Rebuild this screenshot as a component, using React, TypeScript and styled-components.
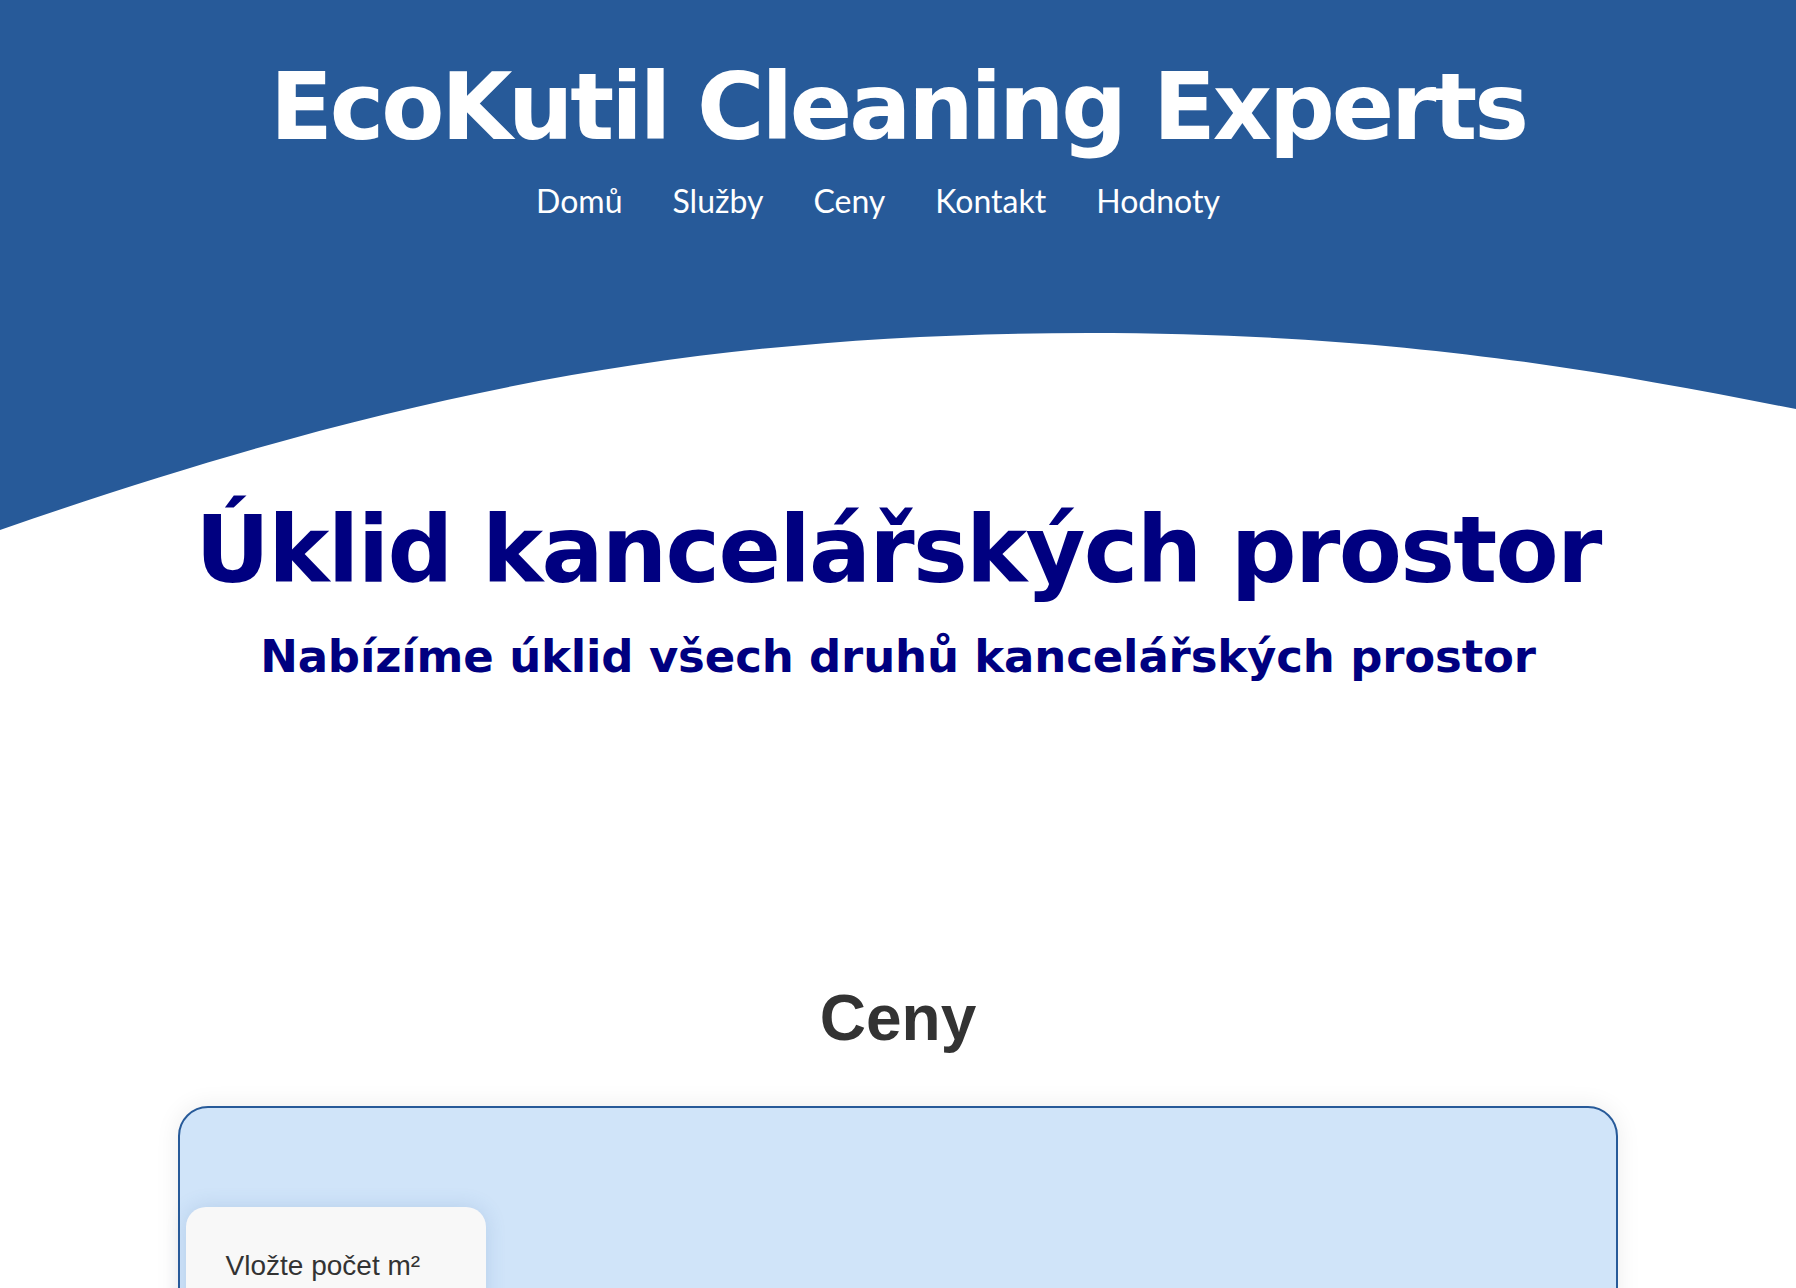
import React from "react";
import styled, { createGlobalStyle } from "styled-components";

const Global = createGlobalStyle`
  html, body { margin: 0; padding: 0; background: #ffffff; }
  body { font-family: "Liberation Sans", Arial, sans-serif; color: #333; }
  * { box-sizing: border-box; }
`;

const BLUE = "#275a99";

const Header = styled.header`
  background: ${BLUE};
  padding: 53px 0 41px;
  display: flex;
  flex-direction: column;
  align-items: center;
  gap: 19px;
`;

const Title = styled.h1`
  margin: 0;
  font-family: "DejaVu Sans", sans-serif;
  font-weight: 700;
  font-size: 92px;
  line-height: 110px;
  letter-spacing: -3.1px;
  color: #fff;
  white-space: nowrap;
`;

const Nav = styled.ul`
  display: flex;
  gap: 50px;
  margin: 0;
  padding: 0 40px 0 0;
  list-style: none;
`;

const NavItem = styled.li`
  display: block;
`;

const NavLink = styled.a`
  font-family: Lato, sans-serif;
  font-size: 32px;
  line-height: 38px;
  color: #fff;
  text-decoration: none;
`;

const WaveSvg = styled.svg`
  display: block;
  width: 100%;
  height: 269px;
`;

const Hero = styled.section`
  margin-top: -34px;
  display: flex;
  flex-direction: column;
  align-items: center;
  gap: 24px;
  color: #000080;
  font-family: "DejaVu Sans", sans-serif;
  position: relative;
`;

const HeroTitle = styled.h2`
  margin: 0;
  font-weight: 700;
  font-size: 92px;
  line-height: 110px;
  letter-spacing: -1.7px;
  white-space: nowrap;
`;

const HeroSub = styled.p`
  margin: 0;
  font-weight: 700;
  font-size: 45px;
  line-height: 54px;
  letter-spacing: -0.15px;
  white-space: nowrap;
`;

const Pricing = styled.section`
  margin-top: 298px;
  display: flex;
  flex-direction: column;
  align-items: center;
  gap: 50px;
  padding-bottom: 80px;
`;

const SectionTitle = styled.h2`
  margin: 0;
  font-family: "Liberation Sans", Arial, sans-serif;
  font-weight: 700;
  font-size: 64px;
  line-height: 73.5px;
  color: #333;
`;

const Card = styled.div`
  width: calc(80% + 4px);
  background: #d0e4f9;
  border: 2px solid ${BLUE};
  border-radius: 30px;
  box-shadow: 0 0 24px rgba(0, 0, 0, 0.08);
  padding: 99px 6px 60px;
  display: flex;
  gap: 20px;
  min-height: 500px;
`;

const InnerCard = styled.div`
  width: 300px;
  background: #f8f8f8;
  border-radius: 20px;
  box-shadow: 0 0 20px rgba(60, 110, 170, 0.18);
  padding: 43px 20px 30px 40px;
  display: flex;
  flex-direction: column;
  gap: 6px;
`;

const Label = styled.div`
  font-family: "Liberation Sans", Arial, sans-serif;
  font-size: 28px;
  line-height: 32px;
  color: #333;
`;

const Hint = styled.div`
  font-family: "Liberation Sans", Arial, sans-serif;
  font-size: 17px;
  line-height: 22px;
  color: #999;
`;

const links = ["Domů", "Služby", "Ceny", "Kontakt", "Hodnoty"];

export default function App() {
  return (
    <>
      <Global />
      <Header>
        <Title>EcoKutil Cleaning Experts</Title>
        <Nav>
          {links.map((l) => (
            <NavItem key={l}>
              <NavLink href="#">{l}</NavLink>
            </NavItem>
          ))}
        </Nav>
      </Header>
      <WaveSvg viewBox="0 0 1796 269" preserveAspectRatio="none" aria-hidden="true">
        <path
          d="M0,0 H1796 V148 C1600,110 1400,72 1088,72 C700,72 400,130 0,269 Z"
          fill={BLUE}
        />
      </WaveSvg>
      <Hero>
        <HeroTitle>Úklid kancelářských prostor</HeroTitle>
        <HeroSub>Nabízíme úklid všech druhů kancelářských prostor</HeroSub>
      </Hero>
      <Pricing>
        <SectionTitle>Ceny</SectionTitle>
        <Card>
          <InnerCard>
            <Label>Vložte počet m²</Label>
            <Hint>Minimální plocha 50 m²</Hint>
          </InnerCard>
        </Card>
      </Pricing>
    </>
  );
}
